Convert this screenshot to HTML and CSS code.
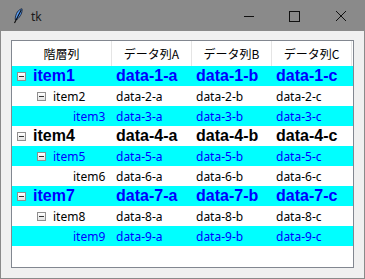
FILE: index.html
```html
<!DOCTYPE html>
<html lang="ja">
<head>
  <meta charset="UTF-8" />
  <title>tk</title>
  <link rel="stylesheet" href="styles.css">
</head>
<body>
  <div class="window">
    <!-- タイトルバー -->
    <div class="titlebar">
      <svg class="feather" width="10" height="16" viewBox="0 0 10 16">
        <path d="M9,0.8 C5.5,1.5 2.5,5 2.2,11.5 L4,11.5 C7.5,8.5 9.5,4.5 9,0.8 Z" fill="#5b9cf0" stroke="#15223a" stroke-width="0.9"/>
        <path d="M8.2,2 L1.5,15" stroke="#0d0d0d" stroke-width="1.1"/>
      </svg>
      <span class="title">tk</span>
      <div class="controls">
        <svg width="46" height="30" viewBox="0 0 46 30"><path d="M18,15.5 H28" stroke="#111" stroke-width="1"/></svg>
        <svg width="46" height="30" viewBox="0 0 46 30"><rect x="17.5" y="10.5" width="10" height="10" fill="none" stroke="#111" stroke-width="1"/></svg>
        <svg width="46" height="30" viewBox="0 0 46 30"><path d="M18,10 L28,20 M28,10 L18,20" stroke="#111" stroke-width="1"/></svg>
      </div>
    </div>

    <!-- クライアント領域 -->
    <div class="client">
      <div class="tree">
        <div class="row head">
          <div class="cell">階層列</div>
          <div class="cell">データ列A</div>
          <div class="cell">データ列B</div>
          <div class="cell">データ列C</div>
        </div>

        <div class="row cyan big">
          <div class="cell name lvl0"><span class="box"></span>item1</div>
          <div class="cell">data-1-a</div><div class="cell">data-1-b</div><div class="cell">data-1-c</div>
        </div>
        <div class="row">
          <div class="cell name lvl1"><span class="box"></span>item2</div>
          <div class="cell">data-2-a</div><div class="cell">data-2-b</div><div class="cell">data-2-c</div>
        </div>
        <div class="row cyan">
          <div class="cell name lvl2">item3</div>
          <div class="cell">data-3-a</div><div class="cell">data-3-b</div><div class="cell">data-3-c</div>
        </div>
        <div class="row big">
          <div class="cell name lvl0"><span class="box"></span>item4</div>
          <div class="cell">data-4-a</div><div class="cell">data-4-b</div><div class="cell">data-4-c</div>
        </div>
        <div class="row cyan">
          <div class="cell name lvl1"><span class="box"></span>item5</div>
          <div class="cell">data-5-a</div><div class="cell">data-5-b</div><div class="cell">data-5-c</div>
        </div>
        <div class="row">
          <div class="cell name lvl2">item6</div>
          <div class="cell">data-6-a</div><div class="cell">data-6-b</div><div class="cell">data-6-c</div>
        </div>
        <div class="row cyan big">
          <div class="cell name lvl0"><span class="box"></span>item7</div>
          <div class="cell">data-7-a</div><div class="cell">data-7-b</div><div class="cell">data-7-c</div>
        </div>
        <div class="row">
          <div class="cell name lvl1"><span class="box"></span>item8</div>
          <div class="cell">data-8-a</div><div class="cell">data-8-b</div><div class="cell">data-8-c</div>
        </div>
        <div class="row cyan">
          <div class="cell name lvl2">item9</div>
          <div class="cell">data-9-a</div><div class="cell">data-9-b</div><div class="cell">data-9-c</div>
        </div>
      </div>
    </div>
  </div>
</body>
</html>
```

FILE: styles.css
```css
:root {
  --frame: #8a8a8a;
  --client: #f0f0f0;
  --cyan: #00ffff;
  --blue: #0000ff;
}

body {
  margin: 0;
  padding: 0;
  font-family: "Noto Sans", "Noto Sans CJK JP", sans-serif;
  font-size: 12px;
  color: #000;
}

.window {
  width: 365px;
  height: 279px;
  box-sizing: border-box;
  border: 1px solid var(--frame);
  display: flex;
  flex-direction: column;
  background: var(--client);
}

/* タイトルバー */
.titlebar {
  height: 30px;
  flex: none;
  background: var(--frame);
  display: flex;
  align-items: center;
}

.feather {
  margin-left: 12px;
}

.title {
  margin-left: 8px;
  font-size: 12px;
  color: #1a1a1a;
}

.controls {
  margin-left: auto;
  display: flex;
}

.controls svg {
  display: block;
}

/* ツリービュー */
.client {
  flex: 1;
  padding: 9px 10px 10px 10px;
  display: flex;
}

.tree {
  flex: 1;
  border: 1px solid #828790;
  background: #fff;
}

.row {
  display: grid;
  grid-template-columns: 100px 80px 80px 80px;
  height: 20px;
  align-items: center;
  white-space: nowrap;
}

.row .cell {
  padding-left: 4px;
  display: flex;
  align-items: center;
  height: 100%;
  box-sizing: border-box;
}

.row.head {
  height: 25px;
}

.row.head .cell {
  justify-content: center;
  padding-left: 0;
  border-right: 1px solid #e5e5e5;
  font-family: "Noto Sans CJK JP", sans-serif;
  font-size: 12px;
}

.row.cyan {
  background: var(--cyan);
  color: var(--blue);
}

.row.big {
  font-family: "Liberation Sans", Arial, sans-serif;
  font-weight: bold;
  font-size: 16px;
}

.cell.name {
  justify-content: flex-start;
}

.cell.lvl0 { padding-left: 5px; }
.cell.lvl1 { padding-left: 25px; }
.cell.lvl2 { padding-left: 61px; }

.box {
  width: 7px;
  height: 7px;
  border: 1px solid #8f8f8f;
  background: linear-gradient(#ffffff, #e3e3e3);
  margin-right: 7px;
  position: relative;
  flex: none;
}

.box::after {
  content: "";
  position: absolute;
  left: 1px;
  top: 3px;
  width: 5px;
  height: 1px;
  background: #333;
}
```
